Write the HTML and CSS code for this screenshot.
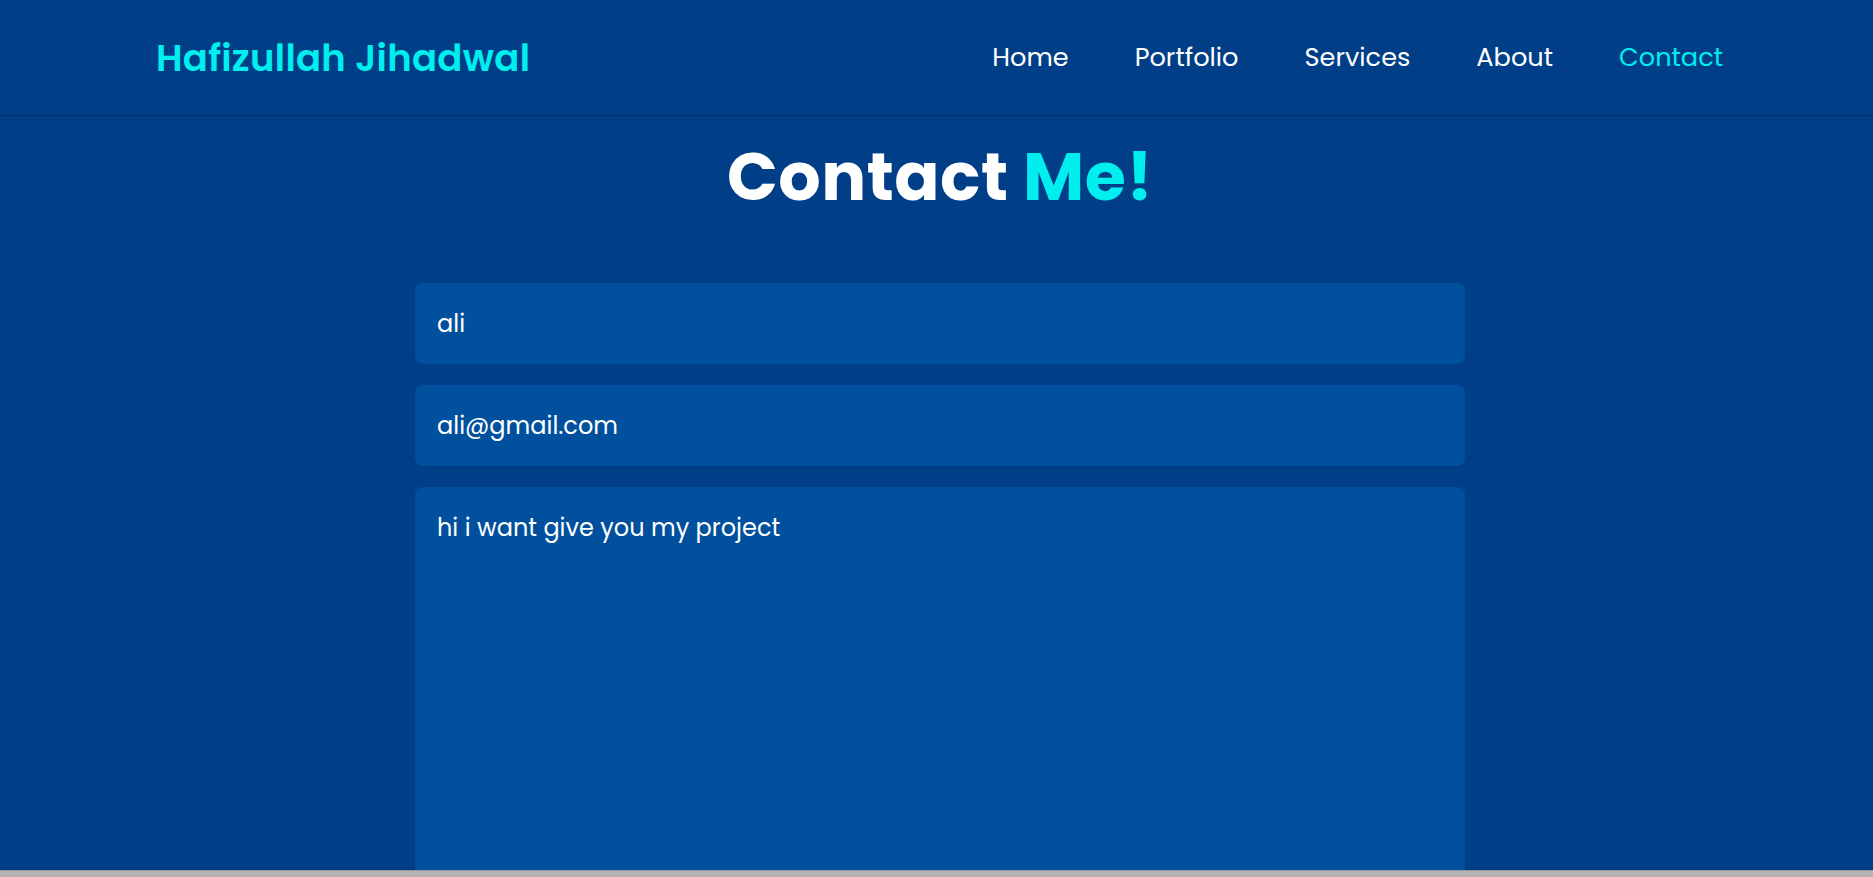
FILE: index.html
```html
<!DOCTYPE html>
<html lang="en">
<head>
<meta charset="utf-8">
<title>Contact - Hafizullah Jihadwal</title>
<link rel="stylesheet" href="styles.css">
</head>
<body>
<header class="header">
  <a class="logo" href="#">Hafizullah Jihadwal</a>
  <nav class="navbar">
    <a href="#">Home</a>
    <a href="#">Portfolio</a>
    <a href="#">Services</a>
    <a href="#">About</a>
    <a href="#" class="active">Contact</a>
  </nav>
</header>
<section class="contact">
  <h2 class="heading">Contact <span>Me!</span></h2>
  <form class="form">
    <input class="field" type="text" value="ali">
    <input class="field" type="email" value="ali@gmail.com">
    <textarea class="field area">hi i want give you my project</textarea>
  </form>
</section>
<div class="bottom-bar"></div>
</body>
</html>
```
FILE: styles.css
```css
* {
  box-sizing: border-box;
}
html, body {
  margin: 0;
  padding: 0;
  overflow: hidden;
}
body {
  background: #003f88;
  color: #fff;
  font-family: "Poppins", Inter, "Noto Sans", sans-serif;
  height: 877px;
}
.header {
  height: 116px;
  border-bottom: 1px solid #00316c;
  display: flex;
  align-items: center;
  justify-content: space-between;
  padding: 0 150px 0 156px;
}
.logo {
  color: #00eeee;
  text-decoration: none;
  font-size: 37px;
  font-weight: 600;
  letter-spacing: 0.3px;
}
.navbar {
  display: flex;
  gap: 66px;
}
.navbar a {
  color: #fff;
  text-decoration: none;
  font-size: 25.6px;
  font-weight: 400;
}
.navbar a.active {
  color: #00eeee;
}
.contact {
  display: flex;
  flex-direction: column;
  align-items: center;
  padding-left: 7px;
}
.heading {
  margin: 21px 0 0;
  font-size: 66.7px;
  font-weight: 700;
  line-height: 80px;
  letter-spacing: 0.5px;
}
.heading span {
  color: #00eeee;
}
.form {
  width: 1050px;
  margin-top: 66px;
  display: flex;
  flex-direction: column;
  gap: 21px;
}
.field {
  display: block;
  width: 100%;
  height: 81px;
  background: #00509d;
  border: none;
  border-radius: 8px;
  padding: 0 22px;
  color: #fff;
  font-family: inherit;
  font-size: 24px;
  outline: none;
}
.area {
  height: 420px;
  padding: 23px 22px;
  resize: none;
  line-height: 36px;
}
.bottom-bar {
  position: fixed;
  left: 0;
  right: 0;
  bottom: 0;
  height: 7px;
  background: #b3b3b3;
  border-top: 1px solid #999;
}
```
